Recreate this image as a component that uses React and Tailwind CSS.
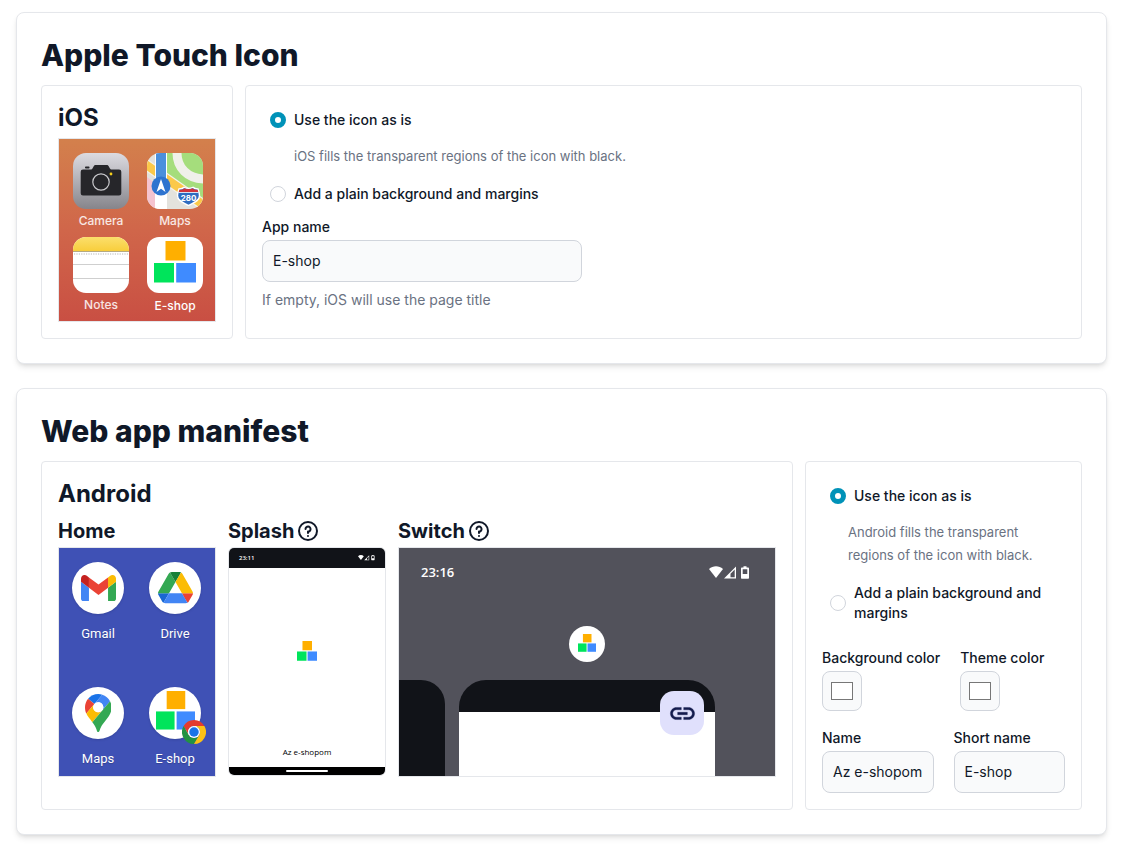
import React, { useState } from 'react';

function Logo({ className }) {
  return (
    <svg className={className} viewBox="0 0 42 42">
      <rect x="11.5" y="0" width="20" height="19.5" fill="#ffaf00" />
      <rect x="0" y="22" width="20" height="19.5" fill="#00e45b" />
      <rect x="22.2" y="22" width="19.8" height="19.5" fill="#3f8bff" />
    </svg>
  );
}

function CameraIcon() {
  return (
    <svg className="w-14 h-14" viewBox="0 0 56 56">
      <defs>
        <linearGradient id="camera-bg" x1="0" y1="0" x2="0" y2="1">
          <stop offset="0" stopColor="#dcdbe1" />
          <stop offset="1" stopColor="#86858b" />
        </linearGradient>
      </defs>
      <rect width="56" height="56" rx="13" fill="url(#camera-bg)" />
      <rect x="12" y="13.5" width="4.5" height="2" rx="0.8" fill="#26262a" />
      <path
        d="M10 16.5h7.5c1.5 0 1.8-.6 2.4-1.8l.8-1.5c.5-1 1-1.3 2-1.3h11c1 0 1.5.3 2 1.3l.8 1.5c.6 1.2 1 1.8 2.4 1.8H46a2.3 2.3 0 0 1 2.3 2.3v21.4a2.3 2.3 0 0 1-2.3 2.3H10a2.3 2.3 0 0 1-2.3-2.3V18.8a2.3 2.3 0 0 1 2.3-2.3z"
        fill="#26262a"
      />
      <circle cx="28" cy="29" r="8.2" fill="none" stroke="#c9c9cd" strokeWidth="1.2" />
      <circle cx="38" cy="21" r="1.4" fill="#f5cf1d" />
    </svg>
  );
}

function AppleMapsIcon() {
  return (
    <svg className="w-14 h-14" viewBox="0 0 56 56">
      <defs>
        <clipPath id="maps-clip">
          <rect width="56" height="56" rx="13" />
        </clipPath>
      </defs>
      <g clipPath="url(#maps-clip)">
        <rect width="56" height="56" fill="#e3e2dd" />
        <path d="M19 0h37v46L19 22z" fill="#a5dd7c" />
        <path d="M30 0c0 14 10 26 28 26" fill="none" stroke="#f0f0ea" strokeWidth="9" />
        <path d="M0 24l9 7v25H0z" fill="#f5c4cf" />
        <path d="M-2 11l60 42" stroke="#f4f2ea" strokeWidth="11" />
        <path d="M-2 11l60 42" stroke="#fbc94a" strokeWidth="8.5" />
        <path d="M8 0h12v56H8z" fill="#ffffff" />
        <path d="M9 0h10v28H9z" fill="#4a8fdc" />
        <circle cx="14" cy="33" r="9.5" fill="#2e74cf" />
        <path d="M14 26l4.5 13-4.5-3.2L9.500 39z" fill="#ffffff" />
        <path
          d="M32 36c2 0 4-.5 5-1.7 2.5 1.2 6.500 1.200 9 0 1 1.200 3 1.700 5 1.700.500 2 1.500 3.500 1.500 6.500 0 6-7 7.500-11 10-4-2.500-11-4-11-10 0-3 1-4.500 1.500-6.500z"
          fill="#2e6cc0"
          stroke="#ffffff"
          strokeWidth="1.4"
        />
        <path d="M32.500 36.700c2 0 4-.500 5-1.500 2.500 1.200 5.500 1.200 8 0 1 1 3 1.500 5 1.500l.8 2.300H31.700z" fill="#d0343c" />
        <path d="M31.500 39.500h20" stroke="#ffffff" strokeWidth="0.8" />
        <text x="41.5" y="47.5" textAnchor="middle" fontSize="8" fontWeight="700" fontFamily="Inter, sans-serif" fill="#ffffff">280</text>
      </g>
    </svg>
  );
}

function NotesIcon() {
  return (
    <svg className="w-14 h-14" viewBox="0 0 56 56">
      <defs>
        <linearGradient id="notes-top" x1="0" y1="0" x2="0" y2="1">
          <stop offset="0" stopColor="#fbdf6c" />
          <stop offset="1" stopColor="#f8ce3c" />
        </linearGradient>
        <clipPath id="notes-clip">
          <rect width="56" height="56" rx="13" />
        </clipPath>
      </defs>
      <g clipPath="url(#notes-clip)">
        <rect width="56" height="56" fill="#ffffff" />
        <rect width="56" height="14" fill="url(#notes-top)" />
        <path d="M0 14.5h56" stroke="#b4a982" />
        <path d="M1 17h55" stroke="#b5b5b5" strokeWidth="1.2" strokeDasharray="1.2 1.2" />
        <path d="M0 27.5h56M0 41.5h56" stroke="#cfcfcf" />
      </g>
    </svg>
  );
}

function GmailIcon() {
  return (
    <svg className="w-[35px]" viewBox="52 42 88 66">
      <path fill="#4285f4" d="M58 108h14V74L52 59v43c0 3.32 2.69 6 6 6" />
      <path fill="#34a853" d="M120 108h14c3.32 0 6-2.69 6-6V59l-20 15" />
      <path fill="#fbbc04" d="M120 48v26l20-15v-8c0-7.42-8.47-11.65-14.4-7.2" />
      <path fill="#ea4335" d="M72 74V48l24 18 24-18v26L96 92" />
      <path fill="#c5221f" d="M52 51v8l20 15V48l-5.6-4.2c-5.94-4.45-14.4-.22-14.4 7.2" />
    </svg>
  );
}

function DriveIcon() {
  return (
    <svg className="w-[35px]" viewBox="0 0 87.3 78">
      <path fill="#1967d2" d="m6.6 66.85 3.85 6.65c.8 1.4 1.95 2.5 3.3 3.3l13.75-23.8h-27.5c0 1.55.4 3.1 1.2 4.5z" />
      <path fill="#34a853" d="m43.65 25-13.75-23.8c-1.35.8-2.5 1.9-3.3 3.3l-25.4 44a9.06 9.06 0 0 0 -1.2 4.5h27.5z" />
      <path fill="#ea4335" d="m73.55 76.8c1.35-.8 2.5-1.9 3.3-3.3l1.6-2.75 7.65-13.25c.8-1.4 1.2-2.95 1.2-4.5h-27.502l5.852 11.5z" />
      <path fill="#188038" d="m43.65 25 13.75-23.8c-1.35-.8-2.9-1.2-4.5-1.2h-18.5c-1.6 0-3.15.45-4.5 1.2z" />
      <path fill="#4285f4" d="m59.8 53h-32.3l-13.75 23.8c1.35.8 2.9 1.2 4.5 1.2h50.8c1.6 0 3.15-.45 4.5-1.2z" />
      <path fill="#fbbc04" d="m73.4 26.5-12.7-22c-.8-1.4-1.95-2.5-3.3-3.3l-13.75 23.8 16.15 28h27.45c0-1.55-.4-3.1-1.2-4.5z" />
    </svg>
  );
}

function GoogleMapsIcon() {
  return (
    <svg className="h-[38px]" viewBox="0 0 92.3 132.3">
      <path fill="#1a73e8" d="M60.2 2.2C55.8.8 51 0 46.1 0 32 0 19.3 6.4 10.8 16.5l21.8 18.3L60.2 2.2z" />
      <path fill="#ea4335" d="M10.8 16.5C4.1 24.5 0 34.9 0 46.1c0 8.7 1.7 15.7 4.6 22l28-33.3-21.8-18.3z" />
      <path fill="#4285f4" d="M46.2 28.5c9.8 0 17.7 7.9 17.7 17.7 0 4.3-1.6 8.3-4.2 11.4 0 0 13.9-16.6 27.5-32.7-5.6-10.8-15.3-19-27-22.7L32.6 34.8c3.3-3.8 8.1-6.3 13.6-6.3" />
      <path fill="#fbbc04" d="M46.2 63.8c-9.8 0-17.7-7.9-17.7-17.7 0-4.3 1.5-8.3 4.1-11.3l-28 33.3c4.8 10.6 12.8 19.2 21 29.9l34.1-40.5c-3.3 3.9-8.1 6.3-13.5 6.3" />
      <path fill="#34a853" d="M59.1 109.2c15.4-24.1 33.3-35 33.3-63 0-7.7-1.9-14.9-5.2-21.3L25.6 98c2.6 3.4 5.3 7.3 7.9 11.3 9.4 14.5 6.8 23.1 12.8 23.1s3.4-8.7 12.8-23.2" />
      <circle cx="46.2" cy="46.2" r="17.7" fill="#ffffff" />
    </svg>
  );
}

function ChromeBadge() {
  return (
    <svg className="absolute -right-[5px] -bottom-[5px] w-6 h-6" viewBox="0 0 48 48">
      <path fill="#e33b2e" d="M3.215 12A24 24 0 0 1 44.785 12L24 12A12 12 0 0 0 13.608 30Z" />
      <path fill="#229342" d="M3.215 12L13.608 30A12 12 0 0 0 34.392 30L24 48A24 24 0 0 1 3.215 12Z" />
      <path fill="#fbc116" d="M24 48L34.392 30A12 12 0 0 0 24 12L44.785 12A24 24 0 0 1 24 48Z" />
      <circle cx="24" cy="24" r="12" fill="#ffffff" />
      <circle cx="24" cy="24" r="9.5" fill="#1a73e8" />
    </svg>
  );
}

function StatusIcons({ className }) {
  return (
    <svg className={className} viewBox="0 0 41 13" fill="#ffffff">
      <path d="M0 3C4-.6 10-.6 14 3L7 12z" />
      <path d="M15 12.5L27 .5v12zM21.500 7.800v3.500h4.200V3.600z" fillRule="evenodd" />
      <path d="M32 2.500c0-.6.4-1 1-1h1.500V.3h3v1.200H39c.6 0 1 .4 1 1v9.200c0 .6-.4 1-1 1h-6c-.6 0-1-.4-1-1zM33.700 3.300v4.700h4.600V3.300z" fillRule="evenodd" />
    </svg>
  );
}

function HelpButton({ label }) {
  return (
    <button type="button" aria-label={label} className="ml-0.5">
      <svg className="w-6 h-6" viewBox="0 0 24 24" fill="none" stroke="currentColor">
        <path
          strokeLinecap="round"
          strokeLinejoin="round"
          strokeWidth={2}
          d="M9.529 9.988a2.502 2.502 0 1 1 5 .191A2.441 2.441 0 0 1 12 12.582V14m-.01 3.008H12M21 12a9 9 0 1 1-18 0 9 9 0 0 1 18 0Z"
        />
      </svg>
    </button>
  );
}

function Card({ title, children }) {
  return (
    <section className="rounded-lg border border-gray-200 bg-white p-6 shadow-md">
      <h2 className="mb-3 text-3xl font-extrabold">{title}</h2>
      <div className="flex gap-3">{children}</div>
    </section>
  );
}

function Panel({ className, children }) {
  return <div className={`rounded-sm border border-gray-200 p-4 ${className}`}>{children}</div>;
}

function PreviewTitle({ children }) {
  return <h4 className="pt-0.5 text-xl leading-[31px] font-bold">{children}</h4>;
}

function RadioRow({ name, label, checked, onChange }) {
  return (
    <label className="flex items-center gap-2 p-2 text-sm font-medium">
      <input
        type="radio"
        name={name}
        checked={checked}
        onChange={onChange}
        className="h-4 w-4 shrink-0 appearance-none rounded-full border border-gray-300 bg-white checked:border-5 checked:border-cyan-600"
      />
      {label}
    </label>
  );
}

function IconMode({ name, hint, hintClass }) {
  const [mode, setMode] = useState('asIs');
  return (
    <>
      <RadioRow name={name} label="Use the icon as is" checked={mode === 'asIs'} onChange={() => setMode('asIs')} />
      <p className={`pt-[7px] pb-2 text-[13px] leading-[23px] text-gray-500 ${hintClass}`}>{hint}</p>
      <RadioRow
        name={name}
        label="Add a plain background and margins"
        checked={mode === 'plain'}
        onChange={() => setMode('plain')}
      />
    </>
  );
}

function TextField({ id, label, value, onChange }) {
  return (
    <div className="min-w-0">
      <label htmlFor={id} className="mb-[3px] block text-sm font-medium">{label}</label>
      <input
        id={id}
        type="text"
        value={value}
        onChange={(e) => onChange(e.target.value)}
        className="block w-full rounded-lg border border-gray-300 bg-gray-50 p-2.5 text-sm"
      />
    </div>
  );
}

function ColorField({ id, label }) {
  return (
    <div>
      <label htmlFor={id} className="mb-[3px] block text-sm font-medium">{label}</label>
      <input
        id={id}
        type="color"
        defaultValue="#ffffff"
        className="block h-10 w-10 rounded-lg border border-gray-300 bg-gray-50 p-1.5"
      />
    </div>
  );
}

function IosTile({ label, children }) {
  return (
    <div className="flex flex-col items-center">
      {children}
      <span className="mt-1 text-xs leading-4 font-medium text-white/85">{label}</span>
    </div>
  );
}

function AndroidTile({ label, children }) {
  return (
    <div className="flex flex-col items-center">
      <div className="relative flex h-[52px] w-[52px] items-center justify-center rounded-full bg-white shadow-sm">
        {children}
      </div>
      <span className="mt-3 text-[13px] leading-4 text-white text-shadow-xs">{label}</span>
    </div>
  );
}

function IosPreview({ appName }) {
  return (
    <div className="grid h-[184px] w-[158px] grid-cols-[56px_56px] content-start gap-x-[18px] gap-y-2 border border-gray-200 bg-linear-to-b from-[#d3804c] via-[#d0664a] to-[#c94f43] pt-[14px] pl-[14px]">
      <IosTile label="Camera"><CameraIcon /></IosTile>
      <IosTile label="Maps"><AppleMapsIcon /></IosTile>
      <IosTile label="Notes"><NotesIcon /></IosTile>
      <div className="flex flex-col items-center">
        <div className="flex h-14 w-14 justify-center rounded-xl bg-white pt-1">
          <Logo className="h-[42px] w-[42px]" />
        </div>
        <span className="mt-[5px] text-xs leading-4 font-medium text-white">{appName}</span>
      </div>
    </div>
  );
}

function HomePreview({ shortName }) {
  return (
    <div className="grid h-[230px] w-[158px] grid-cols-[52px_52px] content-start gap-x-[25px] gap-y-[45px] border border-gray-200 bg-[#3f51b5] pt-[14px] pl-[13px] font-[Roboto,sans-serif]">
      <AndroidTile label="Gmail"><GmailIcon /></AndroidTile>
      <AndroidTile label="Drive"><DriveIcon /></AndroidTile>
      <AndroidTile label="Maps"><GoogleMapsIcon /></AndroidTile>
      <AndroidTile label={shortName}>
        <Logo className="mb-[5px] h-[39px] w-[39px]" />
        <ChromeBadge />
      </AndroidTile>
    </div>
  );
}

function SplashPreview({ name }) {
  return (
    <div className="flex h-[229px] w-[158px] flex-col items-center overflow-hidden rounded-md border border-gray-200 bg-white font-['Open_Sans',sans-serif]">
      <div className="flex h-5 w-full items-center justify-between bg-[#111318] px-[10px] text-[6px] font-semibold text-white">
        <span>23:11</span>
        <StatusIcons className="w-[17px]" />
      </div>
      <Logo className="mt-[73px] h-5 w-5" />
      <span className="mt-auto mb-[9px] text-[8px] leading-3 font-medium text-black">{name}</span>
      <div className="flex h-2 w-full items-center justify-center bg-black">
        <span className="h-0.5 w-[42px] rounded-full bg-white" />
      </div>
    </div>
  );
}

function SwitchPreview() {
  return (
    <div className="flex h-[230px] w-[378px] flex-col items-center overflow-hidden border border-gray-200 bg-[#52525b] font-['Open_Sans',sans-serif]">
      <div className="flex w-full items-center justify-between pt-4 pr-[25px] pl-[22px] text-[13px] leading-4 font-semibold text-white">
        <span>23:16</span>
        <StatusIcons className="w-[41px]" />
      </div>
      <div className="mt-[46px] flex h-9 w-9 shrink-0 justify-center rounded-full bg-white pt-2">
        <Logo className="h-[18px] w-[18px]" />
      </div>
      <div className="mt-[18px] flex w-full flex-1 gap-[14px]">
        <div className="w-[46px] rounded-tr-[24px] bg-[#111318]" />
        <div className="relative w-[256px] overflow-hidden rounded-t-[27px] bg-[#111318] pt-8">
          <div className="h-full bg-white" />
          <div className="absolute top-[11px] right-[11px] flex h-11 w-11 items-center justify-center rounded-[14px] bg-[#e0e0fc]">
            <svg className="h-[29px] w-[29px]" viewBox="0 0 24 24" fill="#141b4d" stroke="#141b4d" strokeWidth="0.3">
              <path d="M3.9 12c0-1.71 1.39-3.1 3.1-3.1h4V7H7c-2.76 0-5 2.24-5 5s2.24 5 5 5h4v-1.9H7c-1.71 0-3.1-1.39-3.1-3.1zM8 13h8v-2H8v2zm9-6h-4v1.9h4c1.71 0 3.1 1.39 3.1 3.1s-1.39 3.1-3.1 3.1h-4V17h4c2.76 0 5-2.24 5-5s-2.24-5-5-5z" />
            </svg>
          </div>
        </div>
      </div>
    </div>
  );
}

export default function App() {
  const [appName, setAppName] = useState('E-shop');
  const [name, setName] = useState('Az e-shopom');
  const [shortName, setShortName] = useState('E-shop');

  return (
    <main className="flex flex-col gap-6 bg-white pt-3 pr-[18px] pb-4 pl-4 font-[Inter,sans-serif] text-gray-900">
      <Card title="Apple Touch Icon">
        <Panel className="shrink-0">
          <h3 className="mb-1 text-2xl font-bold">iOS</h3>
          <IosPreview appName={appName} />
        </Panel>
        <Panel className="flex-1">
          <IconMode name="ios-mode" hint="iOS fills the transparent regions of the icon with black." hintClass="pl-8" />
          <div className="mt-[5px] max-w-80">
            <TextField id="ios-name" label="App name" value={appName} onChange={setAppName} />
          </div>
          <p className="mt-2 text-sm text-gray-500">If empty, iOS will use the page title</p>
        </Panel>
      </Card>

      <Card title="Web app manifest">
        <Panel className="shrink-0">
          <h3 className="mb-1 text-2xl font-bold">Android</h3>
          <div className="flex gap-3">
            <div>
              <PreviewTitle>Home</PreviewTitle>
              <HomePreview shortName={shortName} />
            </div>
            <div>
              <div className="flex items-center">
                <PreviewTitle>Splash</PreviewTitle>
                <HelpButton label="About the splash screen" />
              </div>
              <SplashPreview name={name} />
            </div>
            <div>
              <div className="flex items-center">
                <PreviewTitle>Switch</PreviewTitle>
                <HelpButton label="About the app switcher" />
              </div>
              <SwitchPreview />
            </div>
          </div>
        </Panel>
        <Panel className="min-w-0 flex-1">
          <IconMode name="android-mode" hint="Android fills the transparent regions of the icon with black." hintClass="pl-[26px]" />
          <div className="mt-[17px] flex gap-5">
            <ColorField id="background-color" label="Background color" />
            <ColorField id="theme-color" label="Theme color" />
          </div>
          <div className="mt-[17px] grid grid-cols-2 gap-5">
            <TextField id="android-name" label="Name" value={name} onChange={setName} />
            <TextField id="short-name" label="Short name" value={shortName} onChange={setShortName} />
          </div>
        </Panel>
      </Card>
    </main>
  );
}
